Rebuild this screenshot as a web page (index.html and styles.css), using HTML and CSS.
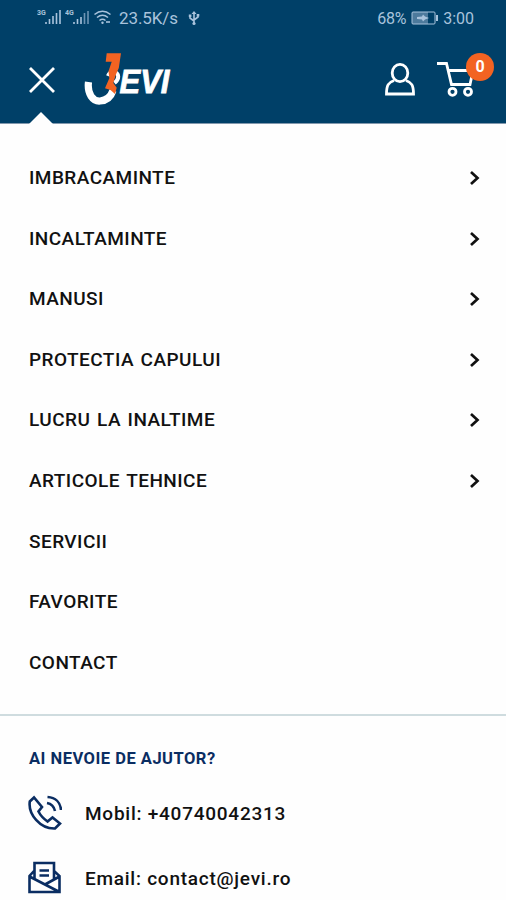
FILE: index.html
```
<!DOCTYPE html>
<html lang="ro">

<head>
  <meta charset="utf-8">
  <title>JEVI</title>
  <meta name="viewport" content="width=device-width, initial-scale=1">
  <link rel="stylesheet" href="styles.css">
</head>

<body>
  <div class="status-bar">
    <div class="status-left">
      <svg class="signal" width="26" height="20" viewBox="0 0 26 20">
        <text class="net" x="0" y="7">3G</text>
        <path d="M9 16v-2M12.500 16v-5M16 16v-8M19.500 16V5M23 16V2" />
      </svg>
      <svg class="signal" width="26" height="20" viewBox="0 0 26 20">
        <text class="net" x="0" y="7">4G</text>
        <path d="M9 16v-2M12.500 16v-5M16 16v-7" />
        <path class="weak" d="M19.500 16V5M23 16V3" />
      </svg>
      <svg class="wifi" width="20" height="20" viewBox="0 0 20 20">
        <path d="M1.500 6.500Q9.500 0 17.500 6.500M4 9.500q5.500-4.500 11 0M6.500 12.500q3-2.500 6 0" />
        <circle cx="9.500" cy="14.800" r="1.200" />
        <path d="M13 14h4" />
      </svg>
      <span class="speed">23.5K/s</span>
      <svg class="usb" width="12" height="18" viewBox="0 0 12 18">
        <path d="M6 14V4M6 12L2 9V6M6 11l4-3V6" />
        <path class="fill" d="M6 2l2.500 3h-5zM.8 5.500h2.600V8H.8zM8.700 5h2.600v2.500H8.700z" />
        <circle class="fill" cx="6" cy="14.500" r="1.600" />
      </svg>
    </div>
    <div class="status-right">
      <span class="percent">68%</span>
      <svg class="battery" width="28" height="14" viewBox="0 0 28 14">
        <rect class="level" x="1" y="1" width="16" height="12" />
        <rect class="case" x="1" y="1" width="23" height="12" rx="1" />
        <path class="fill" d="M25 4h2v6h-2zM6 6l5-.5 1-2 2 2 4 1.500-4 1.500-2 2-1-2-5-.5z" />
      </svg>
      <span class="time">3:00</span>
    </div>
  </div>

  <header class="header">
    <button class="menu-close" aria-label="Inchide">
      <svg width="28" height="28" viewBox="0 0 28 28">
        <path d="M2 2l24 24M26 2L2 26" />
      </svg>
    </button>
    <a class="logo" href="#">
      <svg width="90" height="56" viewBox="0 0 90 56">
        <path class="hook" d="M4.500 31C3 43 9 50.500 16 50c7-.5 11-4.500 13-10.500" />
        <path class="hook-top" d="M24 25c2-5.500 10-5.500 10.200.5 0 3-1.200 4.500-3.700 6.500" />
        <path class="one" d="M22.700 2.300H37L34.800 17l-3.100 7-2.400 8 3.400 4.700L31 43l-4.500-4-5.500-1.700 4.300-10-.8-7 3.200-9.600h-6z" />
        <text class="logo-text" x="35.500" y="42" textLength="50" lengthAdjust="spacingAndGlyphs">EVI</text>
      </svg>
    </a>
    <a class="account" href="#" aria-label="Cont">
      <svg width="30" height="34" viewBox="0 0 30 34">
        <ellipse cx="15" cy="10" rx="7.800" ry="8.600" />
        <path d="M9 17.500C3.500 19.500 1.500 22 1.500 31h27C28.500 22 26.500 19.500 21 17.500" />
      </svg>
    </a>
    <a class="cart" href="#" aria-label="Cos">
      <svg width="38" height="38" viewBox="0 0 38 38">
        <path d="M0 2.500h9.500l5 21h18.500L36 9.500H11.500" />
        <circle cx="15.500" cy="30.800" r="3.500" />
        <circle cx="31" cy="30.800" r="3.500" />
      </svg>
      <span class="cart-count">0</span>
    </a>
  </header>

  <nav class="menu">
    <a class="menu-item" href="#"><span>IMBRACAMINTE</span>
      <svg class="chevron" width="11" height="16" viewBox="0 0 11 16"><path d="M2 2l6.500 6L2 14" /></svg></a>
    <a class="menu-item" href="#"><span>INCALTAMINTE</span>
      <svg class="chevron" width="11" height="16" viewBox="0 0 11 16"><path d="M2 2l6.500 6L2 14" /></svg></a>
    <a class="menu-item" href="#"><span>MANUSI</span>
      <svg class="chevron" width="11" height="16" viewBox="0 0 11 16"><path d="M2 2l6.500 6L2 14" /></svg></a>
    <a class="menu-item" href="#"><span>PROTECTIA CAPULUI</span>
      <svg class="chevron" width="11" height="16" viewBox="0 0 11 16"><path d="M2 2l6.500 6L2 14" /></svg></a>
    <a class="menu-item" href="#"><span>LUCRU LA INALTIME</span>
      <svg class="chevron" width="11" height="16" viewBox="0 0 11 16"><path d="M2 2l6.500 6L2 14" /></svg></a>
    <a class="menu-item" href="#"><span>ARTICOLE TEHNICE</span>
      <svg class="chevron" width="11" height="16" viewBox="0 0 11 16"><path d="M2 2l6.500 6L2 14" /></svg></a>
    <a class="menu-item" href="#"><span>SERVICII</span></a>
    <a class="menu-item" href="#"><span>FAVORITE</span></a>
    <a class="menu-item" href="#"><span>CONTACT</span></a>
  </nav>

  <div class="help">
    <p class="help-title">AI NEVOIE DE AJUTOR?</p>
    <a class="help-row" href="#">
      <svg width="34" height="36" viewBox="0 0 34 36">
        <path d="M6 2.500L1.800 6.500C0 19 12 34 27 33.500l5-5-7.500-6-5 4C16 24 12.500 20.500 10.500 16.500L14 12z" />
        <path d="M19 8c5 1 7 3.500 8 8M19.500 2c8 .5 13 5.500 13.500 13" />
      </svg>
      <span>Mobil: +40740042313</span>
    </a>
    <a class="help-row" href="#">
      <svg width="34" height="34" viewBox="0 0 34 34">
        <path d="M6.500 18V2h19.500v16M6 10l-4.500 5v16h30V15L26 10M1.500 15.500L31.500 31M31.500 15.500L17 23.500" />
        <path d="M11.500 9.500h9.500M11.500 14.500h9.500" />
      </svg>
      <span>Email: contact@jevi.ro</span>
    </a>
  </div>
</body>

</html>
```
FILE: styles.css
```
body {
  margin: 0;
  height: 900px;
  overflow: hidden;
  background-color: #fefefe;
  font-family: Roboto, "Liberation Sans", sans-serif;
  color: #111;
}

a {
  color: inherit;
  text-decoration: none;
}

svg {
  display: block;
  flex: none;
  fill: none;
}

.status-bar {
  display: flex;
  justify-content: space-between;
  height: 36px;
  padding: 0 32px 0 37px;
  background-color: #004068;
  color: #a9c3dc;
  font-size: 16px;
}

.status-left,
.status-right {
  display: flex;
  align-items: center;
}

.status-bar svg {
  stroke: #a9c3dc;
  stroke-width: 1.6;
}

.status-bar .fill,
.wifi circle {
  fill: #a9c3dc;
  stroke: none;
}

.signal {
  margin-right: 2px;
}

.signal .weak {
  stroke: #6d94b4;
}

.status-bar .net {
  fill: #a9c3dc;
  stroke: none;
  font-size: 7px;
  font-weight: bold;
}

.speed {
  margin: 0 10px 0 6px;
  font-size: 17px;
  letter-spacing: -.1px;
}

.percent {
  margin-right: 5px;
  letter-spacing: -.3px;
}

.battery .level {
  fill: #4d7a9c;
  stroke: none;
}

.battery .case {
  stroke-width: 1;
}

.time {
  margin-left: 4px;
}

.header {
  display: flex;
  align-items: flex-start;
  height: 88px;
  background-color: #004068;
  border-bottom: 1px solid #8298ad;
  box-sizing: border-box;
}

.header svg {
  stroke: #fff;
  stroke-width: 2.8;
}

.menu-close {
  position: relative;
  height: 88px;
  margin-left: 28px;
  padding: 30px 0 0;
  border: 0;
  background: none;
  box-sizing: border-box;
  display: flex;
  align-items: flex-start;
}

.menu-close::after {
  content: "";
  position: absolute;
  left: 1px;
  bottom: 0;
  border: 12px solid transparent;
  border-top: 0;
  border-bottom-color: #fefefe;
}

.logo {
  margin: 15px auto 0 28px;
}

.header .hook {
  stroke-width: 7.2;
}

.header .hook-top {
  stroke-width: 4;
}

.header .one {
  fill: #f26322;
  stroke: none;
}

.header .logo-text {
  fill: #fff;
  stroke: #fff;
  stroke-width: .8;
  font: italic bold 33px "Liberation Sans", sans-serif;
}

.account {
  margin: 27px 22px 0 0;
}

.cart {
  position: relative;
  margin: 25px 31px 0 0;
}

.cart-count {
  position: absolute;
  top: -8px;
  left: 29px;
  width: 28px;
  height: 28px;
  border-radius: 50%;
  background-color: #f26322;
  color: #fff;
  font-size: 16px;
  font-weight: bold;
  line-height: 27px;
  text-align: center;
}

.menu {
  padding: 23.5px 26px 21.5px 29px;
  border-bottom: 2px solid #cfdcdf;
}

.menu-item {
  display: flex;
  align-items: center;
  justify-content: space-between;
  height: 60.55px;
  font-size: 19px;
  font-weight: 500;
  letter-spacing: .45px;
  word-spacing: 1.5px;
}

.chevron {
  margin-top: 1px;
  stroke: #111;
  stroke-width: 2.7;
}

.help {
  padding: 31px 28px 0;
}

.help-title {
  margin: 0 0 10px 1px;
  color: #0a2d62;
  font-size: 16.5px;
  font-weight: bold;
  letter-spacing: .5px;
  line-height: 24px;
}

.help-row {
  display: flex;
  align-items: center;
  height: 65px;
  gap: 23px;
  font-size: 19px;
  font-weight: 500;
  letter-spacing: .75px;
}

.help-row svg {
  stroke: #0a2d62;
  stroke-width: 2.6;
}
```
